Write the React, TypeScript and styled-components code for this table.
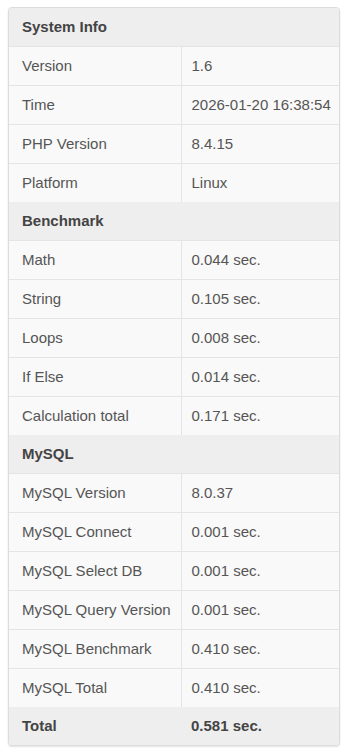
import React from "react";
import styled, { createGlobalStyle } from "styled-components";

const GlobalStyle = createGlobalStyle`
    body {
        margin: 0;
        background: #ffffff;
        font-family: "Liberation Sans", Arial, sans-serif;
    }
`;

interface Row {
    label: string;
    value: string;
}

interface Section {
    title: string;
    rows: Row[];
}

const sections: Section[] = [
    {
        title: "System Info",
        rows: [
            { label: "Version", value: "1.6" },
            { label: "Time", value: "2026-01-20 16:38:54" },
            { label: "PHP Version", value: "8.4.15" },
            { label: "Platform", value: "Linux" },
        ],
    },
    {
        title: "Benchmark",
        rows: [
            { label: "Math", value: "0.044 sec." },
            { label: "String", value: "0.105 sec." },
            { label: "Loops", value: "0.008 sec." },
            { label: "If Else", value: "0.014 sec." },
            { label: "Calculation total", value: "0.171 sec." },
        ],
    },
    {
        title: "MySQL",
        rows: [
            { label: "MySQL Version", value: "8.0.37" },
            { label: "MySQL Connect", value: "0.001 sec." },
            { label: "MySQL Select DB", value: "0.001 sec." },
            { label: "MySQL Query Version", value: "0.001 sec." },
            { label: "MySQL Benchmark", value: "0.410 sec." },
            { label: "MySQL Total", value: "0.410 sec." },
        ],
    },
];

const Page = styled.div`
    padding: 7px 8px 8px 8px;
`;

const Panel = styled.div`
    border: 1px solid #dcdcdc;
    border-radius: 4px;
    overflow: hidden;
    box-shadow: 0 1px 2px rgba(0, 0, 0, 0.12);
    background: #f9f9f9;
`;

const Table = styled.table`
    width: 100%;
    border-collapse: collapse;
    table-layout: fixed;
    font-size: 15px;
    color: #555555;
`;

const LabelCol = styled.col`
    width: 172px;
`;

// section header: no top border, the background change marks it
const HeadCell = styled.th`
    text-align: left;
    padding: 9px 13px;
    line-height: 20px;
    background: #eeeeee;
    color: #444444;
    font-weight: bold;
`;

const LabelCell = styled.td<{ $total?: boolean }>`
    padding: 9px 13px;
    line-height: 20px;
    border-top: ${(p) => (p.$total ? "none" : "1px solid #e4e4e4")};
    border-right: ${(p) => (p.$total ? "none" : "1px solid #e4e4e4")};
    font-weight: ${(p) => (p.$total ? "bold" : "normal")};
    white-space: nowrap;
`;

const ValueCell = styled.td<{ $total?: boolean }>`
    padding: 9px 10px;
    line-height: 20px;
    border-top: ${(p) => (p.$total ? "none" : "1px solid #e4e4e4")};
    font-weight: ${(p) => (p.$total ? "bold" : "normal")};
    white-space: nowrap;
`;

const TotalRow = styled.tr`
    background: #eeeeee;
    color: #444444;
`;

const App: React.FC = () => {
    return (
        <>
            <GlobalStyle />
            <Page>
                <Panel>
                    <Table>
                        <colgroup>
                            <LabelCol />
                            <col />
                        </colgroup>
                        <tbody>
                            {sections.map((section) => (
                                <React.Fragment key={section.title}>
                                    <tr>
                                        <HeadCell colSpan={2}>{section.title}</HeadCell>
                                    </tr>
                                    {section.rows.map((row) => (
                                        <tr key={row.label}>
                                            <LabelCell>{row.label}</LabelCell>
                                            <ValueCell>{row.value}</ValueCell>
                                        </tr>
                                    ))}
                                </React.Fragment>
                            ))}
                            <TotalRow>
                                <LabelCell $total>Total</LabelCell>
                                <ValueCell $total>0.581 sec.</ValueCell>
                            </TotalRow>
                        </tbody>
                    </Table>
                </Panel>
            </Page>
        </>
    );
};

export default App;
